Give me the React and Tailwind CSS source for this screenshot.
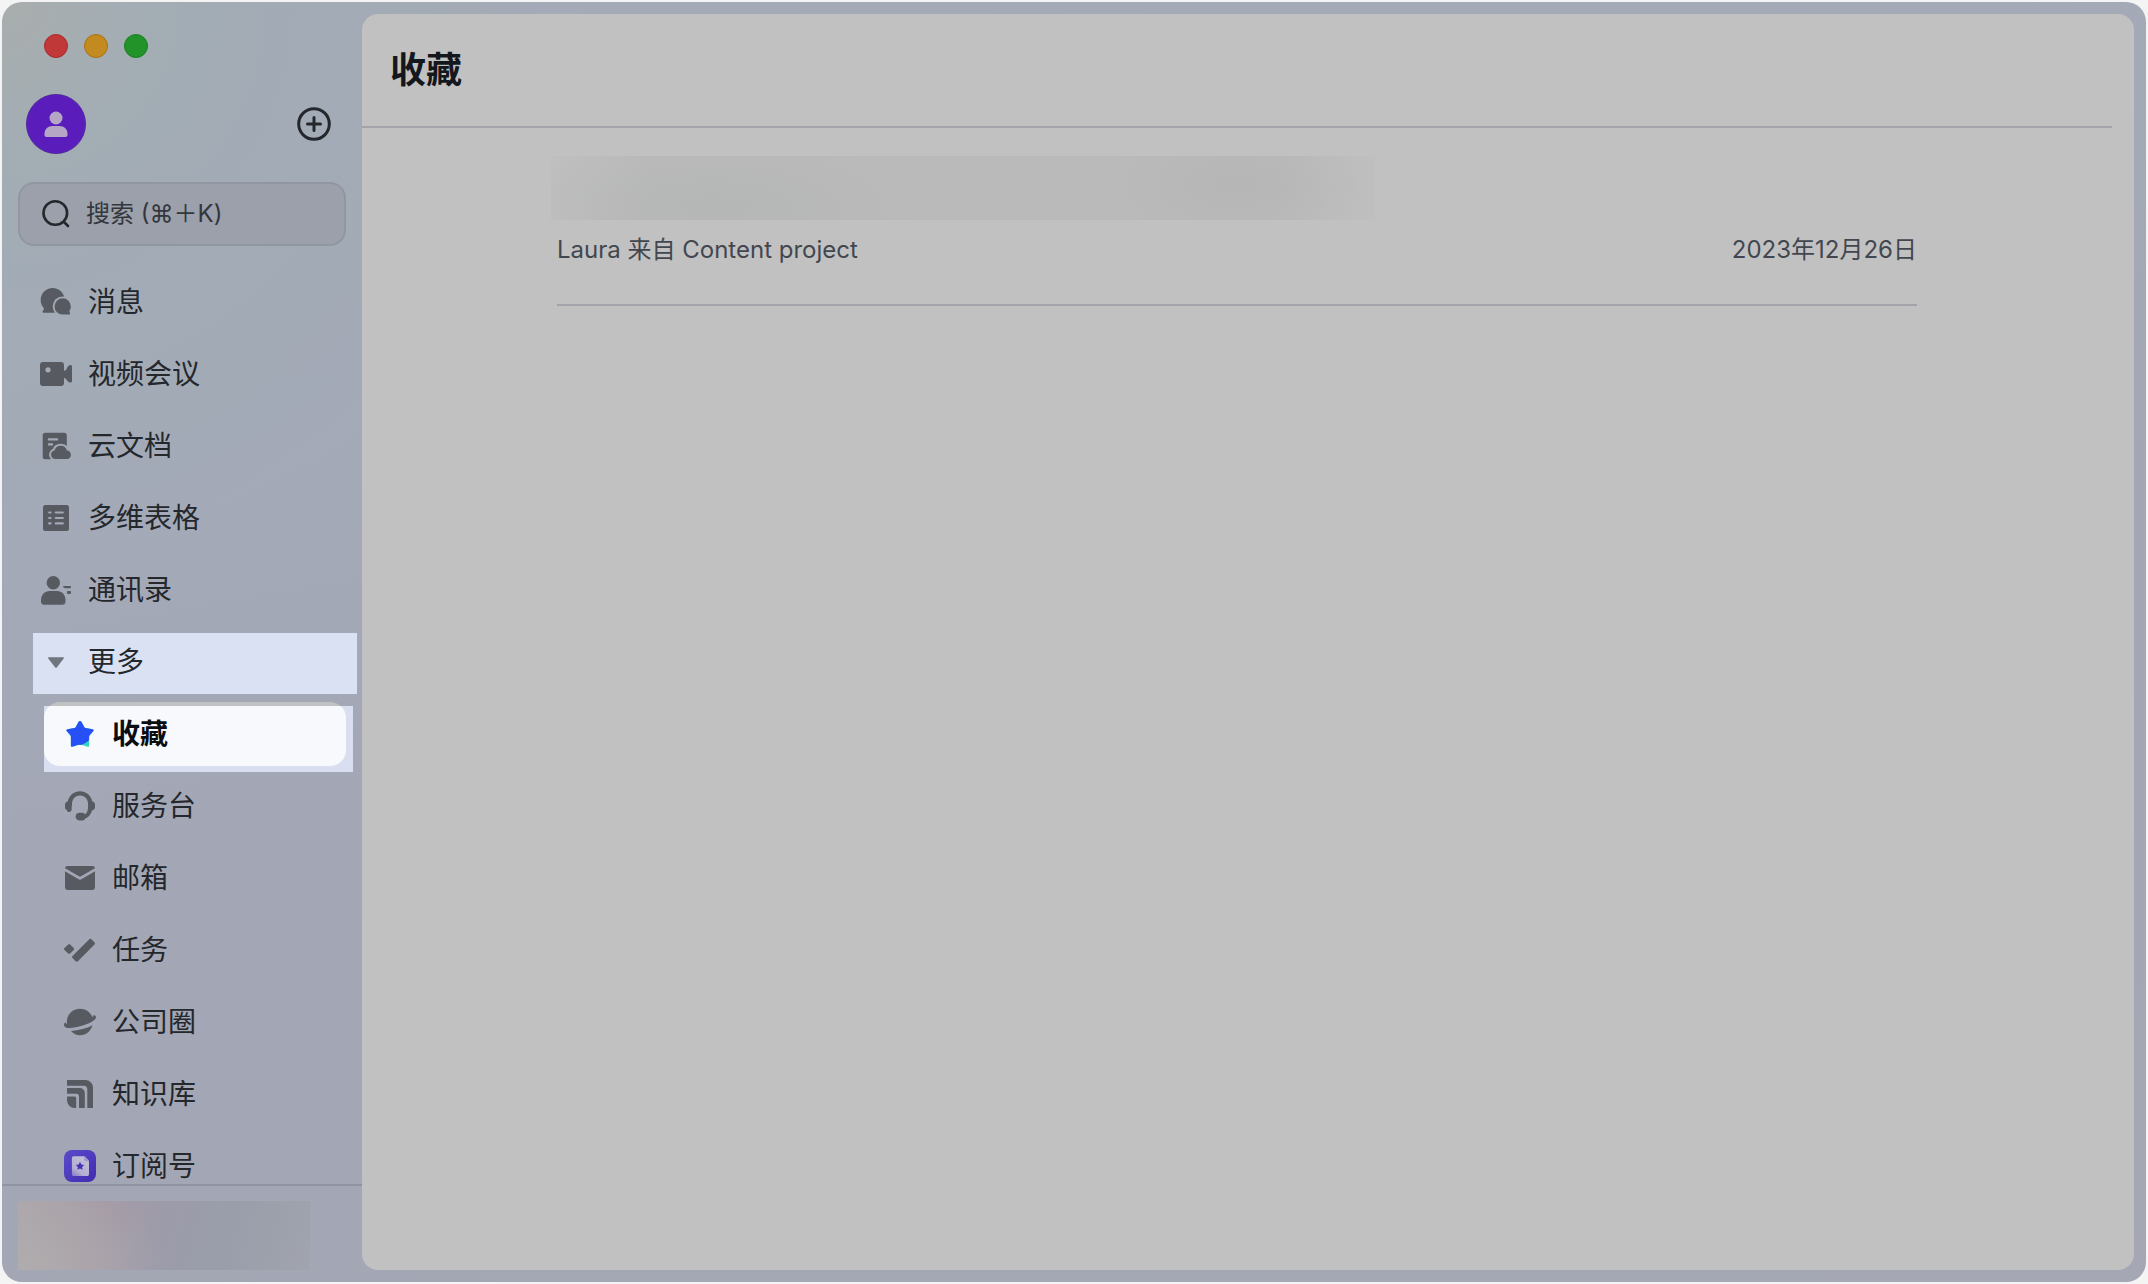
import React from "react";

function Icon({ children, className = "text-[#575b61]" }) {
  return (
    <svg viewBox="0 0 32 32" fill="currentColor" aria-hidden="true" className={`size-8 shrink-0 ${className}`}>
      {children}
    </svg>
  );
}

function MessageIcon() {
  return (
    <Icon>
      <mask id="message-cut">
        <rect width="32" height="32" fill="#fff" />
        <circle cx="22.7" cy="20.4" r="10" fill="#000" />
      </mask>
      <path
        mask="url(#message-cut)"
        d="M12.6 2a12 12 0 0 1 12 12.2c0 7-5 12.5-12 12.5H3.6c-1 0-1.3-1-.8-1.7l1-1.6c.3-.6.1-1-.3-1.6C1.700 19.500.7 17 .7 14A12 12 0 0 1 12.6 2Z"
      />
      <path d="M22.700 12.300a8.100 8.100 0 0 1 8.100 8.100c0 1.600-.5 3-1.200 4.200-.3.500-.2 1 0 1.400l.4 1c.3.900-.2 1.600-1.100 1.600h-6.200a8.100 8.100 0 0 1 0-16.300Z" />
    </Icon>
  );
}

function VideoIcon() {
  return (
    <Icon>
      <path
        fillRule="evenodd"
        d="M3 4h18a3 3 0 0 1 3 3v18a3 3 0 0 1-3 3H3a3 3 0 0 1-3-3V7a3 3 0 0 1 3-3Zm5 5.200a2.600 2.600 0 1 0 0 5.200 2.600 2.600 0 0 0 0-5.200Z"
      />
      <path d="M24 12.800c2 0 2.600-1.500 3.300-3.300.7-1.600 1.700-2.500 3.200-2.500.9 0 1.500.6 1.500 1.500v14.600c0 .9-.6 1.500-1.500 1.500-1.300 0-2.200-.8-3.200-1.900-1-1.200-1.600-2.500-3.300-2.700Z" />
    </Icon>
  );
}

function CloudShape() {
  return (
    <path d="M15.200 29a4.300 4.300 0 0 1-.7-8.500 6.400 6.400 0 0 1 12.400 0A4.300 4.300 0 0 1 27.400 29Z" />
  );
}

function DocIcon() {
  return (
    <Icon>
      <mask id="doc-cut">
        <rect width="32" height="32" fill="#fff" />
        <g fill="#000" stroke="#000" strokeWidth="4">
          <CloudShape />
        </g>
      </mask>
      <path
        mask="url(#doc-cut)"
        fillRule="evenodd"
        d="M5.200 2.700h19.100a2.500 2.500 0 0 1 2.500 2.500v21.600a2.500 2.500 0 0 1-2.500 2.500H5.200a2.500 2.500 0 0 1-2.500-2.500V5.200a2.500 2.500 0 0 1 2.500-2.500ZM9 8.200a1.200 1.200 0 0 0 0 2.400h8a1.200 1.200 0 0 0 0-2.400Zm0 5a1.200 1.200 0 0 0 0 2.400h3a1.200 1.200 0 0 0 0-2.400Z"
      />
      <CloudShape />
    </Icon>
  );
}

function TableIcon() {
  return (
    <Icon>
      <rect x="3" y="3" width="26" height="26" rx="2.500" />
      <path
        d="M9.200 10.500h1.300M9.200 16h1.300M9.200 21.400h1.300M15.800 10.500h7M15.800 16h7M15.800 21.400h7"
        stroke="#a2a8b5"
        strokeWidth="2.200"
        strokeLinecap="round"
      />
    </Icon>
  );
}

function ContactsIcon() {
  return (
    <Icon>
      <circle cx="13.300" cy="8.700" r="6.700" />
      <path d="M9.500 17h7.700c4.700 0 8.300 4 8.300 8.800v1.900c0 1.700-1.300 3-3 3H4c-1.700 0-3-1.300-3-3v-1.900C1 21 4.800 17 9.500 17Z" />
      <path d="M23.800 12.100h6.400c.5 0 .8.300.8.800s-.4 1.400-1 1.400h-4.200c-.9 0-2.300-.7-2.600-1.300-.2-.5.100-.9.600-.9ZM28 17h2c.6 0 1 .4 1 1v.9c0 .6-.4 1-1 1h-2c-.6 0-1-.4-1-1V18c0-.6.400-1 1-1Z" />
    </Icon>
  );
}

function CaretIcon() {
  return (
    <Icon className="text-[#70757e]">
      <path d="M9 11.300h14c.8 0 1.200.7.700 1.300l-6.900 8.800c-.4.500-1.200.5-1.600 0l-6.900-8.800c-.5-.6-.1-1.300.7-1.300Z" />
    </Icon>
  );
}

function StarIcon() {
  const star =
    "M14.600 3.700c.6-1.100 2.200-1.100 2.800 0l2.800 5.200c.3.500.8.900 1.400 1l7 1.300c1 .2 1.300 1.200.6 2l-3.700 4.300c-.3.400-.4.900-.4 1.400V28c0 .6-.4.900-1 .8-3.300-.6-4.900-2-8.100-2s-4.800 1.400-8.100 2c-.6.100-1-.2-1-.8v-9.100c0-.5-.1-1-.4-1.400l-3.700-4.300c-.7-.8-.3-1.800.7-2l6.900-1.300c.6-.1 1.100-.5 1.400-1Z";
  return (
    <Icon className="text-[#2650f5]">
      <clipPath id="star-clip">
        <path d={star} />
      </clipPath>
      <path d={star} fill="#33d3bc" />
      <path clipPath="url(#star-clip)" d="M0 0h32v12c-2.500 5.500-6 12-15.500 15.200L6 31H0Z" />
    </Icon>
  );
}

function HeadsetIcon() {
  return (
    <Icon>
      <path
        d="M5.800 16v-2.500a10.200 10.200 0 0 1 20.400 0V17c0 5.500-3 9.800-8 10.200"
        fill="none"
        stroke="currentColor"
        strokeWidth="4.200"
      />
      <path d="M4.500 11.300h3.200v7.900c0 1.500-1.200 2.800-2.800 2.800-1.200 0-2.100-.9-2.100-2.100C1.600 19.500 1 18.500 1 17.200v-2.400c0-2 1.500-3.500 3.500-3.500ZM27.500 11.300c2 0 3.500 1.500 3.500 3.500v2.400c0 2-1.500 3.200-3.500 3.200h-3.200v-9.100Z" />
      <path d="M15.300 22.800h3.200c1.600 0 2.500 1 2.500 2.500v3c0 1.300-1 2.300-2.400 2.300h-2.800c-2.400 0-4.200-1.500-4.200-4 0-2.200 1.500-3.800 3.700-3.800Z" />
    </Icon>
  );
}

function MailIcon() {
  return (
    <Icon>
      <path d="M3.500 4h25c1.700 0 2.500 1 2.400 2.200L17 14.300c-.7.400-1.400.4-2 0L1.100 6.200C1 5 1.800 4 3.500 4Z" />
      <path d="m1 9.200 13.700 8.100c.8.500 1.800.5 2.600 0L31 9.200v16.100c0 1.600-1.100 2.700-2.700 2.700H3.700C2.100 28 1 26.900 1 25.300Z" />
    </Icon>
  );
}

function TaskIcon() {
  return (
    <Icon>
      <path d="M25.300 5.200c.6-.6 1.500-.6 2.100 0l3.100 3.100c.6.600.6 1.500 0 2.100L13.900 27.300c-.6.600-1.600.6-2.200 0L8.500 24.100c-.6-.6-.6-1.500 0-2.100ZM4.200 10.600c.6-.6 1.400-.6 2 0l3.500 3.500c.5.500.5 1.300 0 1.800l-3.500 3.600c-.6.600-1.400.6-2 0L.5 16c-.6-.6-.6-1.400 0-2Z" />
    </Icon>
  );
}

function PlanetIcon() {
  return (
    <Icon>
      <path d="M3 17.800C1.900 9.500 8 2.700 15.900 2.700c5.700 0 10.500 3.300 12.500 8.400.7-.5 1.200-1.100 1.200-2 1.300.1 2.400.9 2.400 2.200 0 4-11.500 8.300-21.500 10.300C4.500 22.600 0 22 0 18.700c0-1.100.6-2 1.500-2.500 0 .8.500 1.400 1.500 1.600Z" />
      <path d="M7 25c8-.6 15.300-2.500 21.600-5.700C26.800 25.200 22 29.300 16 29.300c-3.500 0-6.500-1.600-9-4.300Z" />
    </Icon>
  );
}

function WikiIcon() {
  return (
    <Icon>
      <path d="M3 2h18.500A7.500 7.500 0 0 1 29 9.500V30h-5.700V11.200c0-2-1.400-3.400-3.400-3.400H3Z" />
      <path d="M3 10h12.800a5 5 0 0 1 5 5v15H15V18.200c0-1.500-1-2.500-2.500-2.500H3Z" />
      <path d="M3 18.500h7.500c1 0 1.700.7 1.700 1.700V30H10.500A7.500 7.500 0 0 1 3 22.500Z" />
    </Icon>
  );
}

function SubscribeIcon() {
  return (
    <Icon>
      <defs>
        <linearGradient id="sub-bg" x1="0" y1="0" x2="1" y2="1">
          <stop offset="0" stopColor="#5b4ccb" />
          <stop offset="1" stopColor="#412ab0" />
        </linearGradient>
        <linearGradient id="sub-page" x1="0.800" y1="0" x2="0.200" y2="1">
          <stop offset="0" stopColor="#c3c0d6" />
          <stop offset="0.750" stopColor="#b3aed2" />
          <stop offset="1" stopColor="#8f84c8" />
        </linearGradient>
      </defs>
      <rect width="32" height="32" rx="8" fill="url(#sub-bg)" />
      <path d="M9.500 6.300h10.700l4.800 5v12.900c0 1-.8 1.800-1.800 1.800H9.700c-1 0-1.800-.8-1.800-1.800V8c0-1 .7-1.700 1.600-1.700Z" fill="url(#sub-page)" />
      <path d="M20.200 6.300h.6l4.200 4.300v.7h-3.600c-.7 0-1.200-.5-1.200-1.200Z" fill="#9d98cf" />
      <path d="m16 11.800 1.300 2.700 2.900.4-2.100 2 .5 2.900-2.600-1.400-2.600 1.400.5-2.900-2.100-2 2.900-.4Z" fill="#4631b6" />
    </Icon>
  );
}

const primary = [
  { label: "消息", icon: <MessageIcon /> },
  { label: "视频会议", icon: <VideoIcon /> },
  { label: "云文档", icon: <DocIcon /> },
  { label: "多维表格", icon: <TableIcon /> },
  { label: "通讯录", icon: <ContactsIcon /> },
];

const secondary = [
  { label: "服务台", icon: <HeadsetIcon /> },
  { label: "邮箱", icon: <MailIcon /> },
  { label: "任务", icon: <TaskIcon /> },
  { label: "公司圈", icon: <PlanetIcon /> },
  { label: "知识库", icon: <WikiIcon /> },
  { label: "订阅号", icon: <SubscribeIcon /> },
];

function NavItem({ icon, label }) {
  return (
    <li>
      <button type="button" className="flex h-16 w-full items-center gap-4 px-[22px] text-left">
        {icon}
        <span>{label}</span>
      </button>
    </li>
  );
}

function SubItem({ icon, label }) {
  return (
    <li className="pl-[26px]">
      <button type="button" className="flex h-16 w-full items-center gap-4 px-5 text-left">
        {icon}
        <span>{label}</span>
      </button>
    </li>
  );
}

function Sidebar() {
  return (
    <aside className="flex w-[360px] shrink-0 flex-col">
      <div className="flex gap-4 px-[42px] pt-8">
        <button type="button" aria-label="关闭" className="size-6 rounded-full border border-[#a9282b] bg-[#c13838]" />
        <button type="button" aria-label="最小化" className="size-6 rounded-full border border-[#a87316] bg-[#c28a1f]" />
        <button type="button" aria-label="缩放" className="size-6 rounded-full border border-[#1a7f20] bg-[#219328]" />
      </div>

      <div className="mt-9 flex items-center justify-between pr-[30px] pl-6">
        <button
          type="button"
          aria-label="个人资料"
          className="flex size-[60px] items-center justify-center rounded-full border border-[#4f2a9c] bg-[#5a1dbb] text-[#b5a6c6]"
        >
          <svg viewBox="0 0 32 32" fill="currentColor" aria-hidden="true" className="size-8">
            <circle cx="16" cy="10" r="6.500" />
            <path d="M12.500 18h7c4.300 0 8 3 8 7.500V27c0 1.300-.8 2-2 2h-19c-1.200 0-2-.7-2-2v-1.500c0-4.500 3.700-7.500 8-7.500Z" />
          </svg>
        </button>
        <button type="button" aria-label="新建" className="text-[#24282c]">
          <svg viewBox="0 0 36 36" fill="none" stroke="currentColor" strokeWidth="3" strokeLinecap="round" aria-hidden="true" className="size-9">
            <circle cx="18" cy="18" r="15.300" />
            <path d="M18 11.500v13M11.500 18h13" />
          </svg>
        </button>
      </div>

      <label className="mx-4 mt-7 flex h-16 items-center gap-[14px] rounded-2xl border-2 border-[#9196a1] bg-[#9ba0ab] px-5">
        <svg viewBox="0 0 32 32" fill="none" stroke="#24282c" strokeWidth="2.600" strokeLinecap="round" aria-hidden="true" className="size-8 shrink-0">
          <circle cx="15.300" cy="15" r="11.800" />
          <path d="m24 24 4 4" />
        </svg>
        <input
          type="search"
          aria-label="搜索"
          placeholder="搜索 (⌘＋K)"
          className="w-full min-w-0 bg-transparent text-2xl text-[#33373c] outline-none placeholder:text-[#33373c]"
        />
      </label>

      <nav className="mt-6 min-h-0 flex-1 overflow-hidden px-4 text-[28px] leading-10 text-[#24272b]">
        <ul className="flex flex-col gap-2">
          {primary.map((item) => (
            <NavItem key={item.label} {...item} />
          ))}
          <li className="relative">
            <span className="absolute top-[3px] -right-[11px] bottom-0 left-[15px] bg-[#d9e1f2]" />
            <button type="button" aria-expanded="true" className="relative flex h-16 w-full items-center gap-4 px-[22px] text-left">
              <CaretIcon />
              <span>更多</span>
            </button>
          </li>
          <li className="relative pl-[26px]">
            <span className="absolute top-1 -right-[7px] -bottom-[6px] left-[26px] bg-[#d9dff0]" />
            <button
              type="button"
              aria-current="page"
              className="relative flex h-16 w-full items-center gap-4 rounded-2xl bg-[linear-gradient(#c0c1c2_4px,#f8f9fd_4px)] px-5 text-left font-bold text-[#0b0d10]"
            >
              <StarIcon />
              <span>收藏</span>
            </button>
          </li>
          {secondary.map((item) => (
            <SubItem key={item.label} {...item} />
          ))}
        </ul>
      </nav>

      <footer className="h-[98px] shrink-0 border-t-2 border-[#9093a0] px-4 pt-[15px]">
        <div className="h-[69px] w-[292px] bg-[radial-gradient(150px_90px_at_0%_100%,#b0acad_0%,transparent_100%),linear-gradient(105deg,#aca7ac_0%,#a69ca7_28%,#9c9baa_50%,#999eaa_72%,#a1a4ae_100%)]" />
      </footer>
    </aside>
  );
}

function FavoriteEntry() {
  return (
    <article className="mx-auto w-full max-w-[1360px] border-b-2 border-[#a3a3a9] pt-7 pb-9 text-2xl text-[#42474f]">
      <div className="-ml-[6px] h-16 w-[824px] max-w-full bg-[radial-gradient(200px_70px_at_20%_80%,#b5b6b6_0%,transparent_100%),radial-gradient(130px_60px_at_83%_45%,#b6b6b6_0%,transparent_100%),linear-gradient(90deg,#bfbfbf_0%,#bababa_12%,#bababa_88%,#bfbfbf_100%)]" />
      <div className="mt-3 flex items-center justify-between leading-9">
        <span>Laura 来自 Content project</span>
        <time dateTime="2023-12-26">2023年12月26日</time>
      </div>
    </article>
  );
}

export default function App() {
  return (
    <div className="h-screen bg-[#f4f4f4] p-[2px] font-[Inter,'Noto_Sans_CJK_SC',sans-serif]">
      <div className="flex h-full rounded-[20px] bg-[radial-gradient(circle_at_0_0,#a9adad_0px,#a3adb3_120px,#a2abb6_320px,transparent_620px),linear-gradient(170deg,#a5aab7_0%,#a4a9b7_35%,#a3a6b4_70%,#a5a8b4_100%)]">
        <Sidebar />
        <main className="my-3 mr-3 min-w-0 flex-1 rounded-2xl bg-[#c1c1c1] pr-[22px]">
          <header className="flex h-[114px] items-center border-b-2 border-[#a3a3a9] px-7">
            <h1 className="text-[36px] leading-[52px] font-bold text-[#14171b]">收藏</h1>
          </header>
          <FavoriteEntry />
        </main>
      </div>
    </div>
  );
}
